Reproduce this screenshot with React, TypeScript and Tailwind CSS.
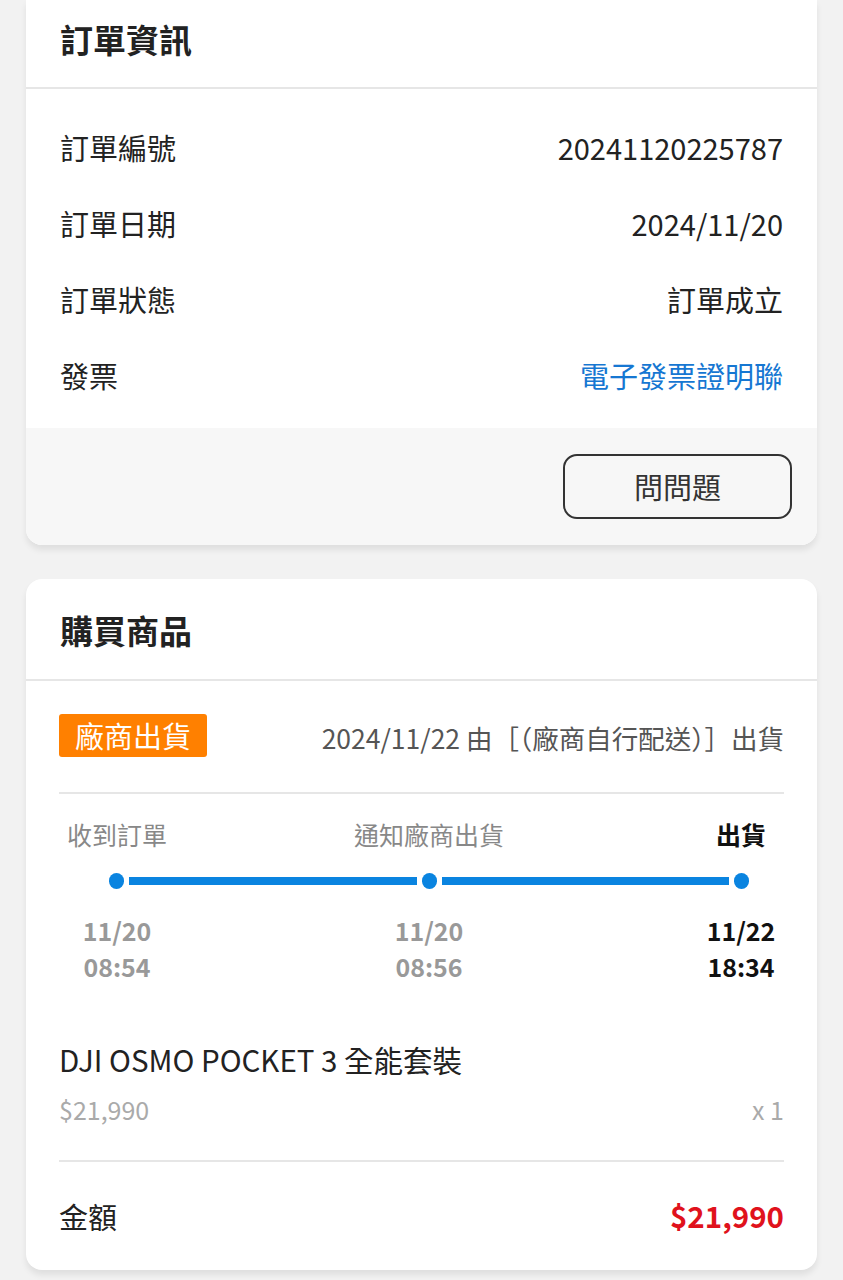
const font = { fontFamily: '"Noto Sans CJK TC", "Noto Sans", sans-serif' };

const infoRows = [
  { label: '訂單編號', value: '20241120225787' },
  { label: '訂單日期', value: '2024/11/20' },
  { label: '訂單狀態', value: '訂單成立' },
  { label: '發票', value: '電子發票證明聯', link: true },
];

const steps = [
  { label: '收到訂單', date: '11/20', time: '08:54' },
  { label: '通知廠商出貨', date: '11/20', time: '08:56' },
  { label: '出貨', date: '11/22', time: '18:34', current: true },
];

const Dot = () => <div className="h-[16px] w-[15px] shrink-0 rounded-full bg-[#0a84e0]" />;
const Segment = () => <div className="mx-[5px] h-[8px] flex-1 bg-[#0a84e0]" />;

export default function App() {
  return (
    <div className="min-h-[1280px] bg-[#f2f2f2] px-[26px] text-[#222]" style={font}>
      <div className="overflow-hidden rounded-b-[16px] bg-white shadow-[0_5px_6px_rgba(0,0,0,0.08)]">
        <div className="flex h-[87px] items-center px-[34px] pb-[8px] text-[33px] font-bold">訂單資訊</div>
        <div className="h-[2px] bg-[#e6e6e6]" />
        <div className="px-[34px] pt-[20px] pb-[15px]">
          {infoRows.map((row) => (
            <div key={row.label} className="flex h-[76px] items-center justify-between text-[29px] leading-none">
              <span>{row.label}</span>
              <span className={row.link ? 'text-[#1677d2]' : ''}>{row.value}</span>
            </div>
          ))}
        </div>
        <div className="flex justify-end bg-[#f7f7f7] px-[25px] py-[26px]">
          <button className="flex h-[65px] w-[229px] items-center justify-center rounded-[14px] border-2 border-[#333] text-[29px] leading-none text-[#333]">
            問問題
          </button>
        </div>
      </div>

      <div className="mt-[34px] overflow-hidden rounded-[16px] bg-white shadow-[0_5px_6px_rgba(0,0,0,0.08)]">
        <div className="flex h-[100px] items-center px-[34px] pt-[4px] text-[33px] font-bold">購買商品</div>
        <div className="h-[2px] bg-[#e6e6e6]" />
        <div className="px-[33px]">
          <div className="flex items-center justify-between pt-[33px] pb-[35px]">
            <span className="flex h-[43px] items-center rounded-[3px] bg-[#ff8000] px-[16px] text-[29px] leading-none text-white">
              廠商出貨
            </span>
            <span className="pt-[5px] text-[26.5px] leading-none text-[#555]">2024/11/22 由［（廠商自行配送）］出貨</span>
          </div>
          <div className="h-[2px] bg-[#e6e6e6]" />

          <div className="ml-[8px] w-[724px] pt-[25px]">
            <div className="flex justify-between">
              {steps.map((s) => (
                <div
                  key={s.label}
                  className={`flex h-[30px] w-[100px] items-center justify-center whitespace-nowrap text-[25px] leading-none ${
                    s.current ? 'font-bold text-[#111]' : 'text-[#888]'
                  }`}
                >
                  {s.label}
                </div>
              ))}
            </div>
            <div className="mt-[24px] flex items-center px-[42px]">
              <Dot />
              <Segment />
              <Dot />
              <Segment />
              <Dot />
            </div>
            <div className="mt-[23px] flex justify-between">
              {steps.map((s) => (
                <div
                  key={s.label + s.time}
                  className={`flex w-[100px] flex-col items-center text-[25px] leading-[36px] font-bold ${
                    s.current ? 'text-[#111]' : 'text-[#999]'
                  }`}
                >
                  <span>{s.date}</span>
                  <span>{s.time}</span>
                </div>
              ))}
            </div>
          </div>

          <div className="mt-[58px] flex h-[36px] items-center text-[29.5px] leading-none text-[#222]">
            DJI OSMO POCKET 3 全能套裝
          </div>
          <div className="mt-[13px] flex h-[36px] items-center justify-between text-[25px] leading-none text-[#aaa]">
            <span>$21,990</span>
            <span>x 1</span>
          </div>
          <div className="mt-[33px] h-[2px] bg-[#e6e6e6]" />
          <div className="flex h-[108px] items-center justify-between text-[29px] leading-none">
            <span>金額</span>
            <span className="text-[29.5px] font-bold text-[#e0121c]">$21,990</span>
          </div>
        </div>
      </div>
    </div>
  );
}
